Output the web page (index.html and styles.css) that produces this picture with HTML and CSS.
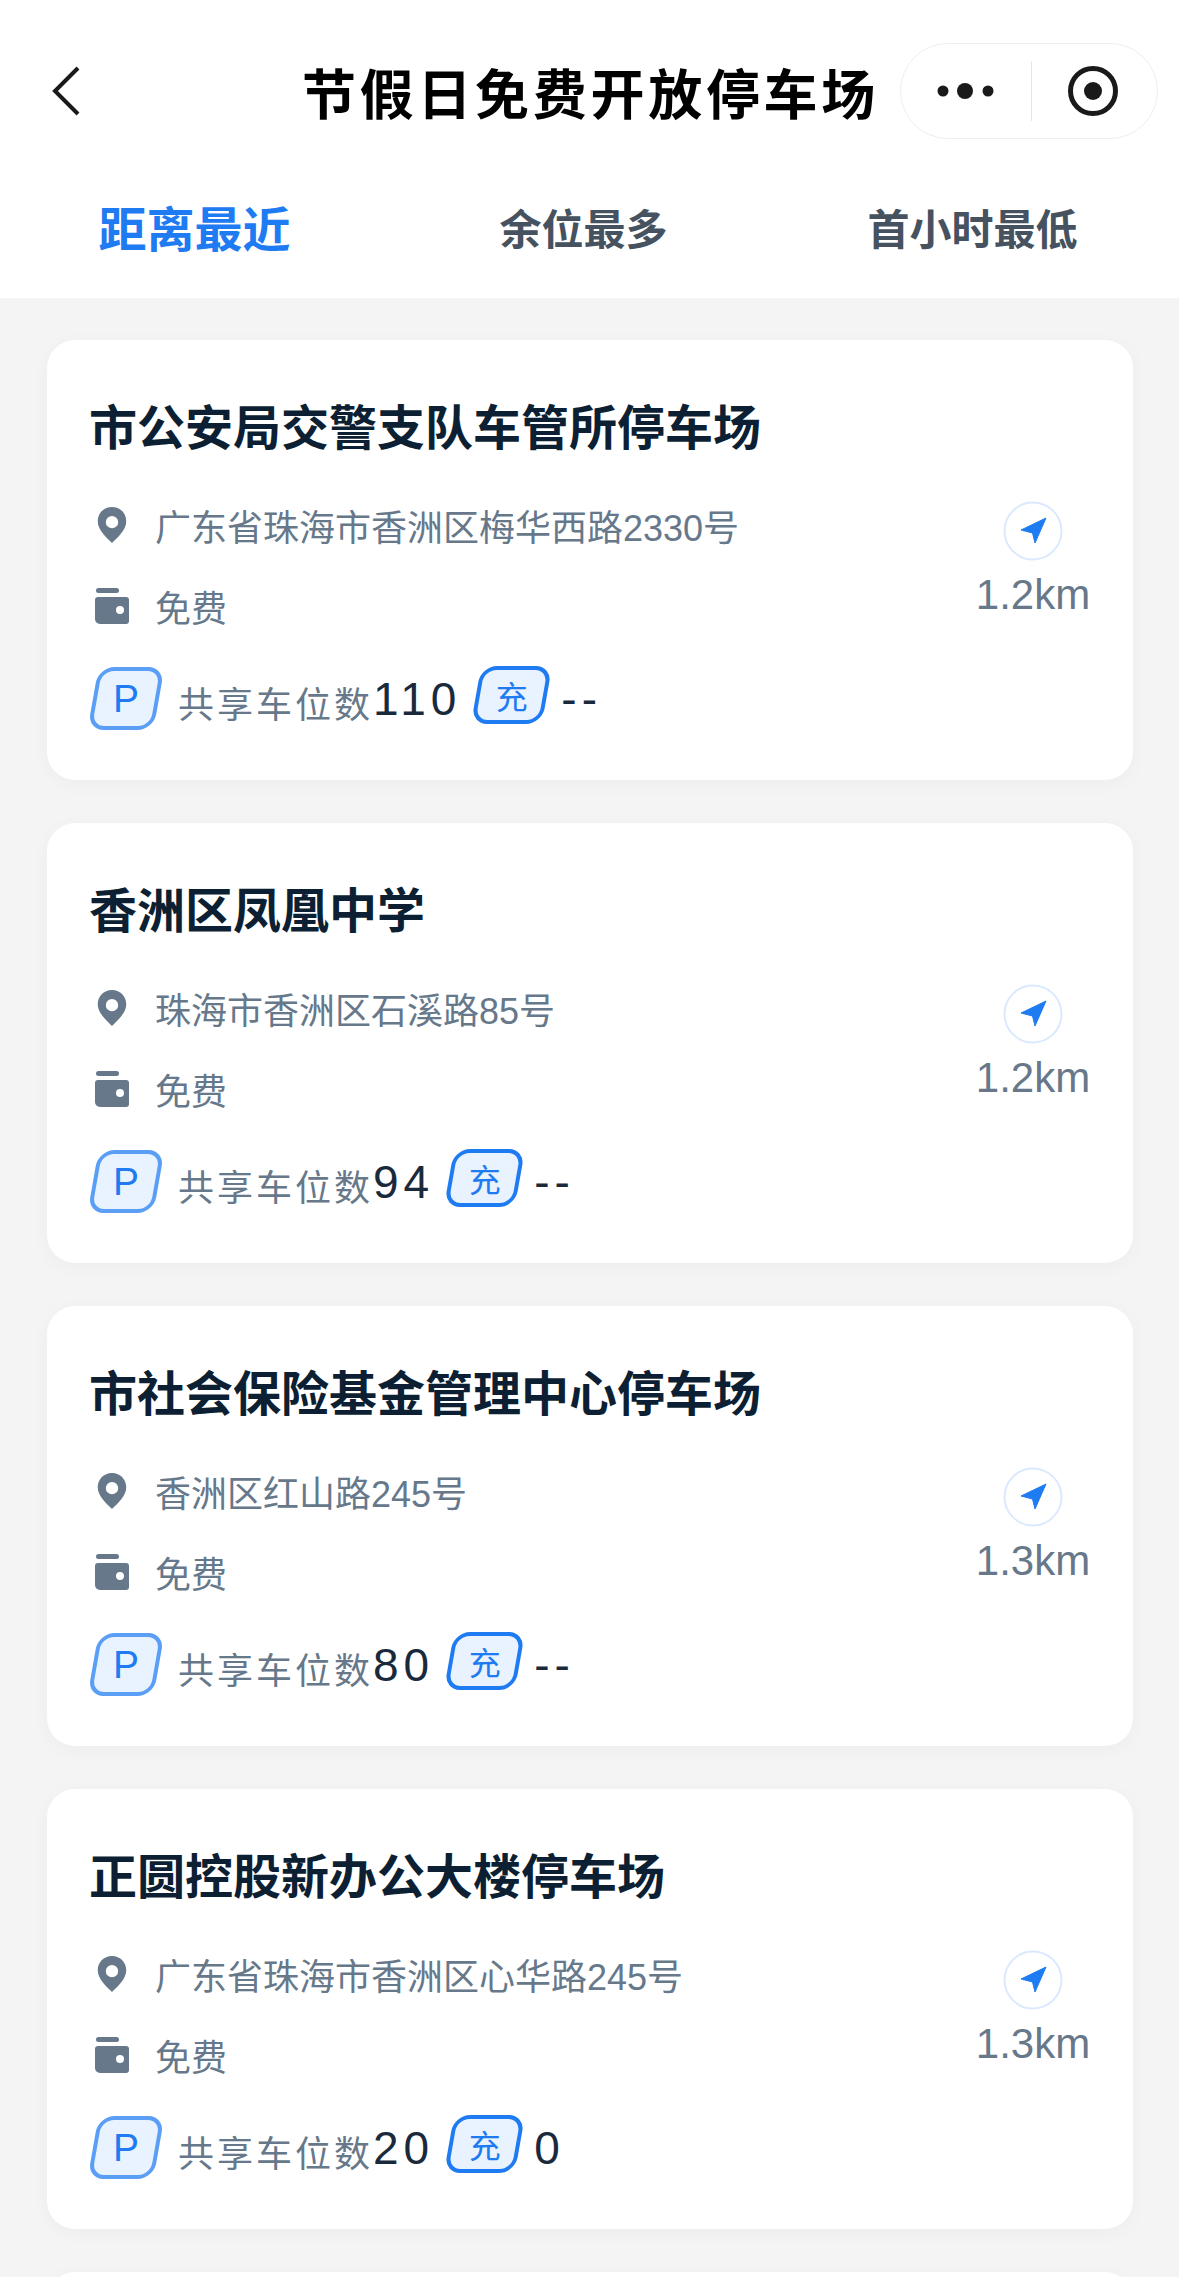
FILE: index.html
```html
<!DOCTYPE html>
<html lang="zh-CN">
<head>
    <meta charset="UTF-8">
    <meta name="viewport" content="width=device-width, initial-scale=1.0">
    <title>节假日免费开放停车场</title>
    <link rel="stylesheet" href="styles.css">
</head>
<body>
    <svg class="defs" width="0" height="0">
        <symbol id="icon-pin" viewBox="0 0 34 40">
            <path fill-rule="evenodd" d="M17 1C8 1 2 8 2 16c0 9 9 17 15 23 6-6 15-14 15-23C32 8 26 1 17 1zm0 9.500a6.500 6.500 0 1 1 0 13 6.500 6.500 0 0 1 0-13z"/>
        </symbol>
        <symbol id="icon-wallet" viewBox="0 0 34 36">
            <rect x="1" y="0" width="23" height="5" rx="2.500"/>
            <path fill-rule="evenodd" d="M3 9h28a3 3 0 0 1 3 3v21a3 3 0 0 1-3 3H5a5 5 0 0 1-5-5V12a3 3 0 0 1 3-3zm22 9a4 4 0 1 0 0 8 4 4 0 0 0 0-8z"/>
        </symbol>
        <symbol id="icon-nav" viewBox="0 0 60 60">
            <circle cx="30" cy="30" r="28.500" fill="#fff" stroke="#dbe9fe" stroke-width="2"/>
            <path fill="#1f7bf2" stroke="#1f7bf2" stroke-width="1" stroke-linejoin="round" d="M18 29 L43 17 L32 42 L29.500 32 Z"/>
        </symbol>
    </svg>

    <div class="top">
        <div class="title-bar">
            <svg class="back" width="34" height="52" viewBox="0 0 34 52">
                <path d="M29 3 L6 26 L29 49" fill="none" stroke="#1a1a1a" stroke-width="4"/>
            </svg>
            <h1>节假日免费开放停车场</h1>
            <div class="capsule">
                <svg width="58" height="18" viewBox="0 0 58 18">
                    <circle cx="6" cy="9" r="5.500" fill="#1a1a1a"/>
                    <circle cx="28" cy="9" r="8" fill="#1a1a1a"/>
                    <circle cx="51" cy="9" r="5.500" fill="#1a1a1a"/>
                </svg>
                <span class="capsule-line"></span>
                <svg width="52" height="52" viewBox="0 0 52 52">
                    <circle cx="26" cy="26" r="22.500" fill="none" stroke="#1a1a1a" stroke-width="5"/>
                    <circle cx="26" cy="26" r="9" fill="#1a1a1a"/>
                </svg>
            </div>
        </div>
        <div class="tabs">
            <span class="tab active">距离最近</span>
            <span class="tab">余位最多</span>
            <span class="tab">首小时最低</span>
        </div>
    </div>

    <div class="list">
        <div class="card">
            <div class="card-info">
                <h2>市公安局交警支队车管所停车场</h2>
                <div class="row"><svg class="row-icon"><use href="#icon-pin"/></svg>广东省珠海市香洲区梅华西路2330号</div>
                <div class="row"><svg class="row-icon"><use href="#icon-wallet"/></svg>免费</div>
                <div class="spaces">
                    <span class="badge badge-p">P</span>
                    <span class="spaces-label">共享车位数</span><span class="num">110</span>
                    <span class="badge badge-c">充</span>
                    <span class="num">--</span>
                </div>
            </div>
            <div class="dist"><svg class="nav-icon"><use href="#icon-nav"/></svg><span>1.2km</span></div>
        </div>
        <div class="card">
            <div class="card-info">
                <h2>香洲区凤凰中学</h2>
                <div class="row"><svg class="row-icon"><use href="#icon-pin"/></svg>珠海市香洲区石溪路85号</div>
                <div class="row"><svg class="row-icon"><use href="#icon-wallet"/></svg>免费</div>
                <div class="spaces">
                    <span class="badge badge-p">P</span>
                    <span class="spaces-label">共享车位数</span><span class="num">94</span>
                    <span class="badge badge-c">充</span>
                    <span class="num">--</span>
                </div>
            </div>
            <div class="dist"><svg class="nav-icon"><use href="#icon-nav"/></svg><span>1.2km</span></div>
        </div>
        <div class="card">
            <div class="card-info">
                <h2>市社会保险基金管理中心停车场</h2>
                <div class="row"><svg class="row-icon"><use href="#icon-pin"/></svg>香洲区红山路245号</div>
                <div class="row"><svg class="row-icon"><use href="#icon-wallet"/></svg>免费</div>
                <div class="spaces">
                    <span class="badge badge-p">P</span>
                    <span class="spaces-label">共享车位数</span><span class="num">80</span>
                    <span class="badge badge-c">充</span>
                    <span class="num">--</span>
                </div>
            </div>
            <div class="dist"><svg class="nav-icon"><use href="#icon-nav"/></svg><span>1.3km</span></div>
        </div>
        <div class="card">
            <div class="card-info">
                <h2>正圆控股新办公大楼停车场</h2>
                <div class="row"><svg class="row-icon"><use href="#icon-pin"/></svg>广东省珠海市香洲区心华路245号</div>
                <div class="row"><svg class="row-icon"><use href="#icon-wallet"/></svg>免费</div>
                <div class="spaces">
                    <span class="badge badge-p">P</span>
                    <span class="spaces-label">共享车位数</span><span class="num">20</span>
                    <span class="badge badge-c">充</span>
                    <span class="num">0</span>
                </div>
            </div>
            <div class="dist"><svg class="nav-icon"><use href="#icon-nav"/></svg><span>1.3km</span></div>
        </div>
        <div class="card"></div>
    </div>
</body>
</html>
```

FILE: styles.css
```css
html, body {
    margin: 0;
    padding: 0;
    height: 2277px;
    overflow: hidden;
}
body {
    font-family: "Liberation Sans", "Noto Sans CJK SC", sans-serif;
    background-color: #f4f4f4;
}
.defs {
    display: block;
    height: 0;
}
.top {
    background-color: #fff;
    height: 298px;
}
.title-bar {
    display: flex;
    align-items: center;
    height: 160px;
    padding: 22px 21px 0 49px;
    box-sizing: border-box;
}
.back {
    flex: none;
}
.title-bar h1 {
    flex: 1;
    margin: 0;
    padding-left: 198px;
    text-align: center;
    font-size: 54px;
    font-weight: 700;
    letter-spacing: 3.700px;
    color: #000;
    white-space: nowrap;
}
.capsule {
    flex: none;
    display: flex;
    align-items: center;
    justify-content: space-between;
    width: 258px;
    height: 96px;
    padding: 0 38px 0 36px;
    box-sizing: border-box;
    border: 1px solid #eeeeee;
    border-radius: 48px;
    background-color: #fff;
}
.capsule-line {
    width: 1px;
    height: 60px;
    background-color: #e6e6e6;
}
.tabs {
    display: grid;
    grid-template-columns: repeat(3, 389px);
    align-items: center;
    height: 132px;
}
.tab {
    text-align: center;
    font-size: 42px;
    font-weight: 700;
    color: #46525f;
}
.tab.active {
    font-size: 48px;
    color: #1f7bf2;
}
.list {
    display: flex;
    flex-direction: column;
    gap: 43px;
    padding: 42px 46px 0 47px;
}
.card {
    display: flex;
    flex: none;
    justify-content: space-between;
    height: 440px;
    padding: 0 43px 0 42px;
    box-sizing: border-box;
    background-color: #fff;
    border-radius: 28px;
    box-shadow: 0 4px 20px rgba(0, 0, 0, 0.03);
}
.card-info {
    min-width: 0;
}
.card h2 {
    margin: 59px 0 0;
    height: 60px;
    line-height: 60px;
    font-size: 48px;
    font-weight: 700;
    color: #0d1f33;
    white-space: nowrap;
}
.row {
    display: flex;
    align-items: center;
    height: 40px;
    margin-top: 41px;
    font-size: 36px;
    color: #66788a;
    white-space: nowrap;
}
.card h2 + .row {
    margin-top: 46px;
}
.row-icon {
    flex: none;
    width: 34px;
    height: 38px;
    margin: 0 26px 0 6px;
    fill: #66788a;
}
.spaces {
    display: flex;
    align-items: center;
    height: 63px;
    margin-top: 41px;
    color: #1a2a3c;
}
.spaces-label {
    margin-left: 19px;
    padding-top: 6px;
    font-size: 36px;
    letter-spacing: 3px;
    color: #66788a;
    white-space: nowrap;
}
.num {
    font-size: 46px;
    letter-spacing: 5px;
}
.badge {
    position: relative;
    flex: none;
    z-index: 0;
    display: flex;
    align-items: center;
    justify-content: center;
    color: #1f7bf2;
}
.badge::before {
    content: "";
    position: absolute;
    inset: 0;
    z-index: -1;
    box-sizing: border-box;
    background-color: #e9f2ff;
    border: 4px solid #1f7bf2;
    border-radius: 16px;
    transform: skewX(-10deg);
}
.badge-p {
    width: 66px;
    height: 63px;
    margin-left: 4px;
    font-size: 39px;
}
.badge-p::before {
    border-color: #5a9ff5;
}
.badge-c {
    width: 71px;
    height: 58px;
    margin: -8px 14px 0 15px;
    font-size: 32px;
}
.dist {
    flex: none;
    display: flex;
    flex-direction: column;
    align-items: center;
    padding-top: 161px;
    width: 114px;
    font-size: 42px;
    color: #66788a;
}
.nav-icon {
    width: 60px;
    height: 60px;
    margin-bottom: 10px;
}
```
